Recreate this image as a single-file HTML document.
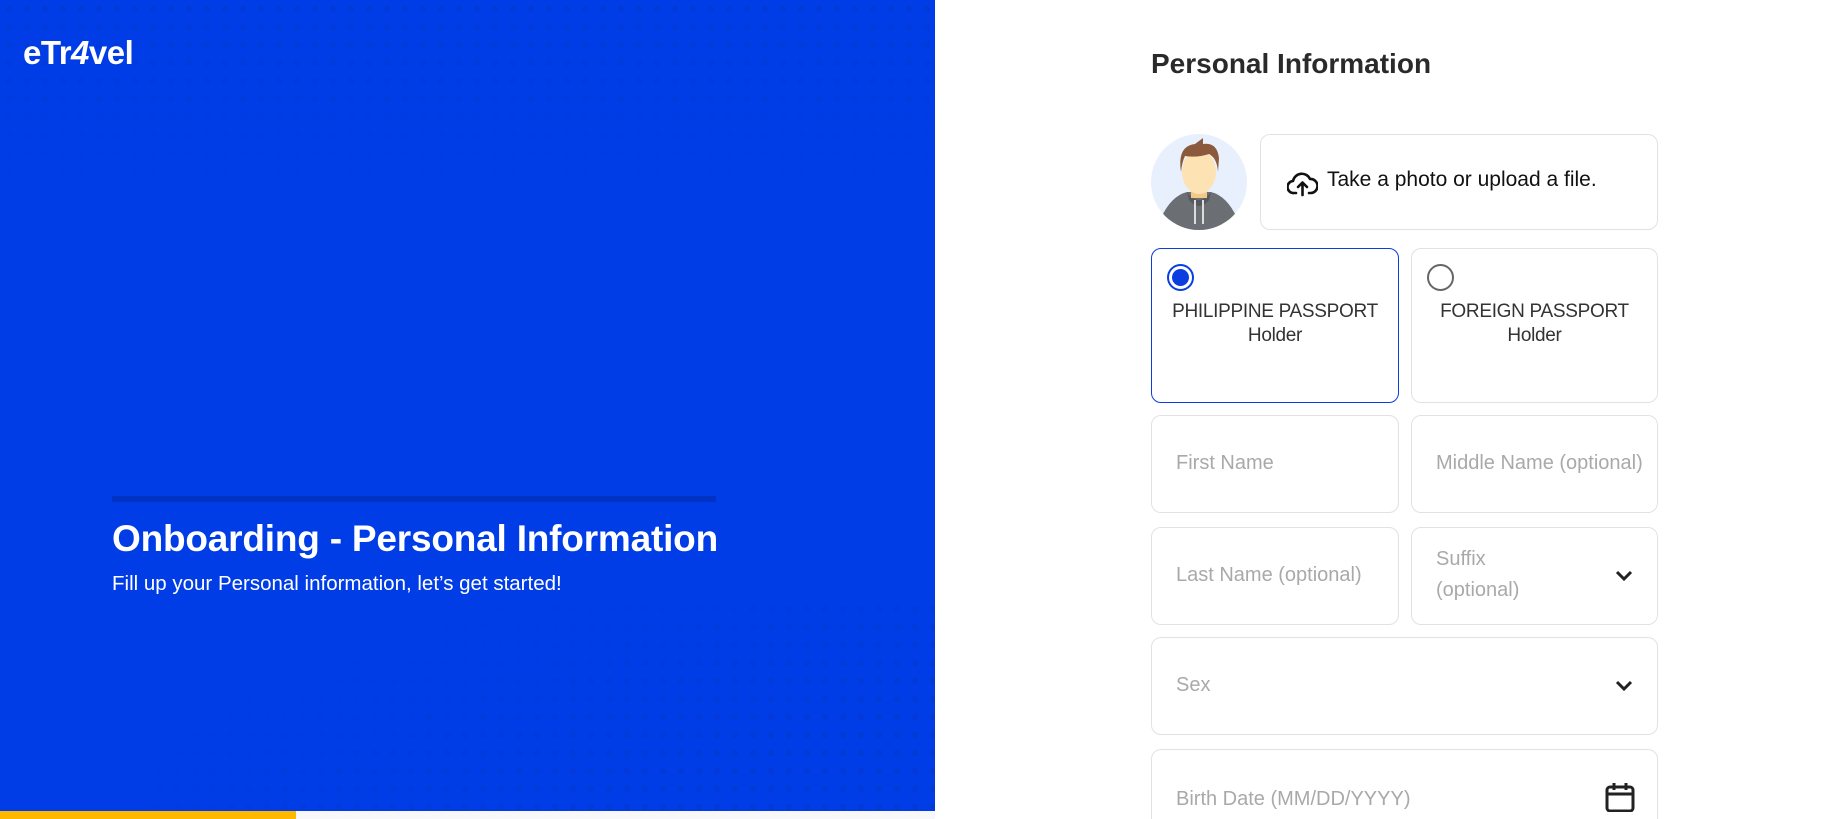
<!DOCTYPE html>
<html style="width:1845px;height:819px;overflow:hidden"><head><meta charset="utf-8"><style>
*{box-sizing:border-box;margin:0;padding:0}
body{width:1845px;height:819px;overflow:hidden;background:#fff;font-family:"Liberation Sans",sans-serif;position:relative}
.left{position:absolute;left:0;top:0;width:935px;height:819px;background:#003de6;overflow:hidden}
.dots1{position:absolute;left:0;top:0;width:935px;height:180px;background-image:radial-gradient(circle,#023ad9 3px,transparent 3.6px);background-size:18px 18px;-webkit-mask-image:linear-gradient(180deg,#000 0%,transparent 100%);mask-image:linear-gradient(180deg,#000,transparent)}
.dots2{position:absolute;left:150px;top:600px;width:785px;height:210px;background-image:radial-gradient(circle,#023ad9 3px,transparent 3.6px);background-size:18px 18px;-webkit-mask-image:linear-gradient(160deg,transparent 25%,#000 75%);mask-image:linear-gradient(160deg,transparent 25%,#000 75%)}
.logo{position:absolute;left:23px;top:34px;color:#fff;font-size:33px;font-weight:bold;letter-spacing:-0.5px}
.bar{position:absolute;left:112px;top:496px;width:604px;height:6px;background:#0033c4}
.h1{position:absolute;left:112px;top:518px;color:#fff;font-size:37px;font-weight:bold;white-space:nowrap;letter-spacing:-0.2px}
.sub{position:absolute;left:112px;top:572px;color:#fff;font-size:20.5px;white-space:nowrap}
.yel{position:absolute;left:0;top:811px;width:296px;height:8px;background:#ffb800}
.gry{position:absolute;left:296px;top:811px;width:639px;height:8px;background:#f8f8fb}
.title{position:absolute;left:1151px;top:48px;font-size:28px;color:#2a2a2a;font-weight:bold}
.box{position:absolute;border:1px solid #e2e2e2;border-radius:10px;background:#fff}
.ph{position:absolute;left:24px;color:#a9a9a9;font-size:20px;white-space:nowrap}
.avatar{position:absolute;left:1151px;top:134px;width:96px;height:96px;border-radius:50%;background:#e9f0fd;overflow:hidden}
.radio{position:absolute;left:15px;top:15px;width:27px;height:27px;border-radius:50%;border:2px solid #666}
.card{text-align:center;font-size:19px;color:#333;line-height:24px;letter-spacing:-0.3px}
.chev{position:absolute;right:24px}
</style></head><body>
<div class="left">
<div class="dots1"></div><div class="dots2"></div>
<div class="logo">eTr<span style="font-style:italic">4</span>vel</div>
<div class="bar"></div>
<div class="h1">Onboarding - Personal Information</div>
<div class="sub">Fill up your Personal information, let’s get started!</div>
<div class="yel"></div><div class="gry"></div>
</div>

<div class="title">Personal Information</div>

<div class="avatar"><svg width="96" height="96" viewBox="0 0 96 96">
<path d="M10 84 Q20 62 36 58 L60 58 Q76 62 86 84 L86 96 L10 96Z" fill="#6b6e72"/>
<path d="M36 58 Q48 74 60 58 L58 66 Q48 78 38 66Z" fill="#55585c"/>
<rect x="40" y="48" width="16" height="16" fill="#f2c98b"/>
<ellipse cx="48" cy="38" rx="17" ry="22" fill="#fde3b4"/>
<path d="M30 38 Q26 12 44 10 L52 4 L52 10 Q66 8 68 24 L67 38 Q66 24 58 20 Q46 24 34 22 Q31 28 30 38Z" fill="#8b5a3c"/>
<line x1="44" y1="66" x2="44" y2="90" stroke="#ddd" stroke-width="2"/><line x1="52" y1="66" x2="52" y2="90" stroke="#ddd" stroke-width="2"/>
</svg></div>

<div class="box" style="left:1260px;top:134px;width:398px;height:96px">
<svg style="position:absolute;left:26px;top:34px" width="31" height="28" viewBox="0 0 31 28" fill="none" stroke="#111" stroke-width="2.6" stroke-linecap="round" stroke-linejoin="round"><path d="M9 24H7A6 6 0 0 1 6 12 9 9 0 0 1 23 10a6 6 0 0 1 1 14h-2"/><path d="M15.5 26V14M11 18l4.5-4.5L20 18"/></svg>
<div style="position:absolute;left:66px;top:33px;font-size:21px;color:#111">Take a photo or upload a file.</div>
</div>

<div class="box card" style="left:1151px;top:248px;width:248px;height:155px;border-color:#0a3ee0">
<div class="radio" style="border-color:#0a3ee0"><div style="position:absolute;left:3px;top:3px;width:17px;height:17px;border-radius:50%;background:#0a3ee0"></div></div>
<div style="position:absolute;left:0;right:0;top:51px">PHILIPPINE PASSPORT<br>Holder</div>
</div>
<div class="box card" style="left:1411px;top:248px;width:247px;height:155px">
<div class="radio"></div>
<div style="position:absolute;left:0;right:0;top:51px">FOREIGN PASSPORT<br>Holder</div>
</div>

<div class="box" style="left:1151px;top:415px;width:248px;height:98px"><div class="ph" style="top:36px">First Name</div></div>
<div class="box" style="left:1411px;top:415px;width:247px;height:98px;overflow:hidden"><div class="ph" style="top:36px">Middle Name (optional)</div></div>
<div class="box" style="left:1151px;top:527px;width:248px;height:98px"><div class="ph" style="top:36px">Last Name (optional)</div></div>
<div class="box" style="left:1411px;top:527px;width:247px;height:98px"><div class="ph" style="top:16px;line-height:31px">Suffix<br>(optional)</div>
<svg class="chev" style="top:42px" width="18" height="12" viewBox="0 0 18 12"><path d="M2 2l7 7 7-7" fill="none" stroke="#222" stroke-width="3"/></svg></div>
<div class="box" style="left:1151px;top:637px;width:507px;height:98px"><div class="ph" style="top:36px">Sex</div>
<svg class="chev" style="top:42px" width="18" height="12" viewBox="0 0 18 12"><path d="M2 2l7 7 7-7" fill="none" stroke="#222" stroke-width="3"/></svg></div>
<div class="box" style="left:1151px;top:749px;width:507px;height:90px;border-bottom-left-radius:0;border-bottom-right-radius:0"><div class="ph" style="top:38px">Birth Date (MM/DD/YYYY)</div>
<svg class="chev" style="top:32px;right:22px" width="30" height="30" viewBox="0 0 30 30" fill="none" stroke="#222" stroke-width="3"><rect x="2" y="5" width="26" height="24" rx="3"/><path d="M9 1v7M21 1v7M2 12h26"/></svg></div>
</body></html>
